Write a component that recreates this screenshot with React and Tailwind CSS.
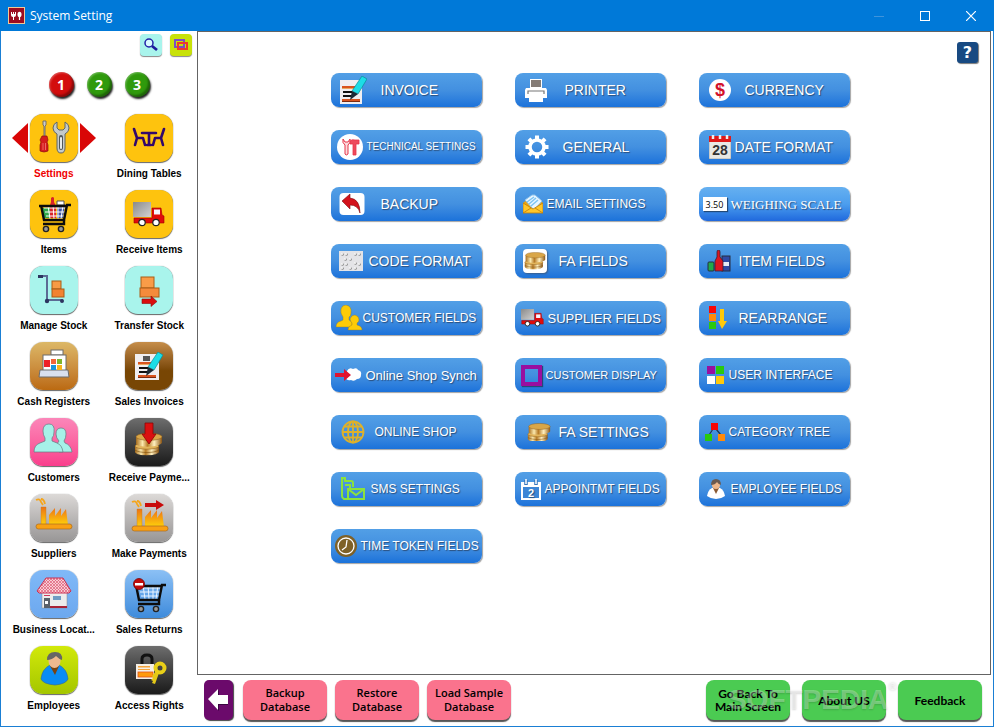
import React, { useState } from "react";

/* ---------- shared drawings ---------- */

function InvoiceIcon({ className, stamp }) {
  return (
    <svg viewBox="0 0 28 28" className={className}>
      {stamp ? <rect x="0" y="2" width="24" height="26" fill="#f0eef0" /> : <rect x="1" y="4" width="22" height="24" fill="#f0eef0" />}
      {stamp && <rect x="8" y="4" width="7" height="5" fill="#555" />}
      <rect x="3" y="10" width="18" height="2" fill="#d9541e" />
      <rect x="3" y="12" width="18" height="1" fill="#e8a860" />
      <rect x="4" y="15" width="9" height="2" fill="#111" />
      <rect x="4" y="19" width="9" height="2" fill="#111" />
      <rect x="3" y="23" width="18" height="2" fill="#d9541e" />
      <rect x="3" y="25" width="18" height="1" fill="#7b2a10" />
      <path d="M23 0 28 3 19 18 13 15z" fill="#1cdde6" stroke="#0a8d98" strokeWidth=".7" />
      <path d="M13 15 19 18 11 24z" fill="#1b2a35" />
    </svg>
  );
}

function Truck({ className }) {
  return (
    <svg viewBox="0 0 32 25" className={className}>
      <defs>
        <linearGradient id="truckBox" x1="0" y1="0" x2="1" y2="1">
          <stop offset="0" stopColor="#8a8a8a" />
          <stop offset="1" stopColor="#d2d2d2" />
        </linearGradient>
      </defs>
      <rect x="0" y="0" width="18" height="15" fill="url(#truckBox)" />
      <path d="M19 6h9l1 7 2 1v7H1v-5h18z" fill="#e10b0b" stroke="#a30000" strokeWidth=".6" />
      <rect x="21" y="7.5" width="6" height="5" fill="#f4f4ff" />
      <circle cx="9" cy="20.5" r="3.2" fill="#fff" stroke="#222" strokeWidth="1.2" />
      <circle cx="23" cy="20.5" r="3.2" fill="#fff" stroke="#222" strokeWidth="1.2" />
    </svg>
  );
}

function Coins({ className }) {
  return (
    <svg viewBox="0 0 28 22" className={className}>
      <defs>
        <linearGradient id="gold">
          <stop offset="0" stopColor="#a86d1c" />
          <stop offset=".25" stopColor="#fbe9ae" />
          <stop offset=".45" stopColor="#b67a25" />
          <stop offset=".7" stopColor="#fff0c0" />
          <stop offset="1" stopColor="#8e5713" />
        </linearGradient>
      </defs>
      <path d="M1 13v6c2 4 20 4 23 0v-6z" fill="url(#gold)" />
      <ellipse cx="12.5" cy="13" rx="11.5" ry="3" fill="#e2b55c" stroke="#8b5a17" strokeWidth=".5" />
      <path d="M2 4v7c3 4 22 3 25-1V4z" fill="url(#gold)" />
      <ellipse cx="14.5" cy="4" rx="12.5" ry="3.5" fill="#d9a648" stroke="#8b5a17" strokeWidth=".5" />
      <path d="M1 17c5 3 18 3 23 0" stroke="#80500f" strokeWidth=".6" fill="none" />
    </svg>
  );
}

/* ---------- sidebar drawings, all on a 48 grid ---------- */

function Drawing({ children }) {
  return (
    <svg viewBox="0 0 48 48" className="size-12" aria-hidden="true">
      {children}
    </svg>
  );
}

function SettingsArt() {
  return (
    <Drawing>
      <path d="M13 7h3v4l-1 1v11h-1V12l-1-1z" fill="#ccc" stroke="#666" strokeWidth=".9" />
      <path d="M12 22h5l1 4-1 2 1 3v6q-4 2-8 0v-6l1-3-1-2z" fill="#d41c1c" stroke="#8c1010" strokeWidth=".7" />
      <path d="M13 29v7M15.500 29v7" stroke="#f37a7a" strokeWidth=".8" />
      <path
        d="M27 8q-4 2-4 6t4 6v14q0 5 4 5t4-5V20q4-2 4-6t-4-6v6l-2 2h-4l-2-2z"
        fill="#c4caca"
        stroke="#5f6666"
        strokeWidth="1"
      />
      <path d="M31 23v11" stroke="#50585a" strokeWidth="4" strokeLinecap="round" />
      <path d="M31 24v10" stroke="#e6eaea" strokeWidth="2" strokeLinecap="round" />
    </Drawing>
  );
}

function DiningArt() {
  return (
    <Drawing>
      <g fill="none" stroke="#32086b" strokeWidth="2.6" strokeLinecap="round" strokeLinejoin="round">
        <path d="M9 15l3 9h6l2 7M12 24l-2 7M39 15l-3 9h-6l-2 7M36 24l2 7" />
        <path d="M17 19h14M24 19v12M22 31h4" />
      </g>
    </Drawing>
  );
}

function Cart({ grid }) {
  return (
    <g>
      <path d="M14 18h22M15 22h20M16 26h18M18 15l2 14M23 15l1 14M28 15v14M33 15l-2 14" stroke={grid} strokeWidth="1" />
      <path d="M9 16h28M11 15l3 15h20l3-15h4" fill="none" stroke="#0c0c0c" strokeWidth="2.4" />
      <path d="M34 30v4H13" fill="none" stroke="#0c0c0c" strokeWidth="2.4" />
      <circle cx="16" cy="39" r="2.6" fill="#999" stroke="#222" strokeWidth="1.4" />
      <circle cx="31" cy="39" r="2.6" fill="#999" stroke="#222" strokeWidth="1.4" />
    </g>
  );
}

function ItemsArt() {
  return (
    <Drawing>
      <path d="M21 8q2-2 3 0v4l2 4v12h-6V15l1-3z" fill="#d8242a" />
      <path d="M12 18h8v10h-6z" fill="#2fa84a" />
      <path d="M27 14h8l-2 14h-6z" fill="#3d55a5" />
      <path d="M27 11h7v4h-7z" fill="#fff" stroke="#555" strokeWidth="1" />
      <Cart grid="#fff" />
    </Drawing>
  );
}

function ReceiveArt() {
  return (
    <div className="flex size-12 items-center justify-center">
      <Truck className="w-8" />
    </div>
  );
}

function ManageArt() {
  return (
    <Drawing>
      <path d="M13 10h4v24h16" fill="none" stroke="#5b6b94" strokeWidth="2" />
      <rect x="8" y="9" width="5" height="3" fill="#2d3560" />
      <circle cx="17" cy="35" r="2.2" fill="#2d3560" />
      <circle cx="32" cy="35" r="2" fill="#2d3560" />
      <rect x="22" y="15" width="9" height="8" fill="#f89b45" stroke="#a95d16" />
      <rect x="22" y="23" width="12" height="8" fill="#f28332" stroke="#a95d16" />
    </Drawing>
  );
}

function TransferArt() {
  return (
    <Drawing>
      <rect x="16" y="11" width="13" height="11" fill="#f99c48" stroke="#a95d16" />
      <rect x="15" y="22" width="19" height="9" fill="#f58b3c" stroke="#a95d16" />
      <path d="M17 33h9v-3l6 5.500-6 5v-3h-9z" fill="#d90d0d" stroke="#8d0a0a" strokeWidth=".6" />
    </Drawing>
  );
}

function CashArt() {
  return (
    <Drawing>
      <g stroke="#6d6d6d" strokeWidth="1">
        <rect x="21" y="8" width="12" height="5" fill="#fff" />
        <rect x="13" y="13" width="23" height="16" fill="#fff" />
        <path d="M10 28h28l1 7H9z" fill="#d9e0ee" />
      </g>
      <rect x="14" y="18" width="6" height="7" fill="#ee2027" />
      <rect x="21" y="17" width="5" height="5" fill="#f2653a" />
      <rect x="27" y="17" width="5" height="5" fill="#7fb52c" />
      <rect x="21" y="23" width="5" height="5" fill="#1a94dd" />
      <rect x="27" y="23" width="5" height="5" fill="#f8b41b" />
    </Drawing>
  );
}

function SalesInvoiceArt() {
  return (
    <div className="flex size-12 items-center justify-center">
      <InvoiceIcon stamp className="size-7" />
    </div>
  );
}

function CustomersArt() {
  return (
    <Drawing>
      <g fill="#a6f1e8" stroke="#627d83" strokeWidth=".7">
        <path d="M29 34q0-5-2-8l2-3q-3-3-3-7 0-6 5-6t5 6q0 4-2 7l1 2q6 2 7 9z" />
        <path d="M4 34q0-7 6-9l5-2v-3q-2-3-2-7 0-7 6-7t5 8q0 4-2 6v3l5 2q5 2 6 9z" />
      </g>
    </Drawing>
  );
}

function ReceivePayArt() {
  return (
    <Drawing>
      <svg x="9" y="14" width="29" height="24" viewBox="0 0 28 22">
        <Coins />
      </svg>
      <path d="M20 5h8v11h3l-7 10-7-10h3z" fill="#da1010" stroke="#8b0505" strokeWidth=".8" />
    </Drawing>
  );
}

function Factory() {
  return (
    <g>
      <defs>
        <linearGradient id="factory" x1="0" y1="0" x2="0" y2="1">
          <stop offset="0" stopColor="#ec7316" />
          <stop offset="1" stopColor="#ffd20a" />
        </linearGradient>
      </defs>
      <path d="M6 6q4-2 5 2l2 3M11 5q3 0 4 5" stroke="#f5a51b" strokeWidth="1.8" fill="none" />
      <path d="M11 13h5v18h-5z" fill="url(#factory)" stroke="#c87920" strokeWidth=".4" />
      <path d="M19 31V21l6-7v8l6-8v8l5-7 2 16z" fill="url(#factory)" />
      <rect x="6" y="30" width="36" height="5" rx="2.5" fill="#f9a013" stroke="#a96a1f" strokeWidth=".7" />
    </g>
  );
}

function SuppliersArt() {
  return (
    <Drawing>
      <Factory />
    </Drawing>
  );
}

function MakePaymentsArt() {
  return (
    <Drawing>
      <g transform="translate(1 2)">
        <Factory />
      </g>
      <path d="M20 9h11V6l8 5-8 5v-3H20z" fill="#c80a0a" />
    </Drawing>
  );
}

function BusinessArt() {
  return (
    <Drawing>
      <defs>
        <pattern id="tiles" width="3" height="3" patternUnits="userSpaceOnUse">
          <rect width="3" height="3" fill="#f9ccd4" />
          <path d="M0 0l3 3M3 0L0 3" stroke="#dd5b77" strokeWidth=".7" />
        </pattern>
      </defs>
      <rect x="12" y="22" width="25" height="16" fill="#ececec" stroke="#888" strokeWidth=".5" />
      <path d="M16 8h17l8 13-2 2H9l-2-2z" fill="url(#tiles)" stroke="#cc2f52" strokeWidth="1" />
      <rect x="14" y="28" width="6" height="10" fill="#5a6068" />
      <rect x="15" y="31" width="3" height="3" fill="#fff" />
      <rect x="23" y="26" width="8" height="4" fill="#6f9cc4" />
      <rect x="14" y="25" width="6" height="1" fill="#d0355a" />
      <rect x="20" y="36" width="17" height="2" fill="#a82237" />
    </Drawing>
  );
}

function ReturnsArt() {
  return (
    <Drawing>
      <Cart grid="#eaf4ff" />
      <circle cx="14" cy="14" r="5.5" fill="#c00b0b" stroke="#790505" strokeWidth=".8" />
      <rect x="10" y="13" width="8" height="2.5" fill="#fff" />
    </Drawing>
  );
}

function EmployeesArt() {
  return (
    <Drawing>
      <path d="M11 33q1-10 9-14h9q8 4 9 14-2 5-13 6-12-1-14-6z" fill="#0a8cf5" stroke="#2a63a0" strokeWidth=".6" />
      <path d="M20 20l5 9 4-9z" fill="#7a4310" />
      <ellipse cx="24.5" cy="15" rx="6" ry="7" fill="#efb98f" />
      <path d="M17 14q0-8 8-8t7 8q-3-1-6-4-4 4-9 4z" fill="#666" />
    </Drawing>
  );
}

function AccessArt() {
  return (
    <Drawing>
      <path d="M17 19v-6q0-4 5-4t5 4v6" fill="none" stroke="#121212" strokeWidth="3" />
      <rect x="11" y="18" width="18" height="15" fill="#f4efe6" />
      <rect x="13" y="20" width="12" height="1.5" fill="#f4a33a" />
      <rect x="13" y="23" width="12" height="1" fill="#f4a33a" />
      <rect x="13" y="26" width="15" height="5" fill="#ff9a0c" stroke="#e0541a" strokeWidth=".8" />
      <path d="M31 25l3 2-4 11-3-1 1-2-2-1 2-2-1-2z" fill="#e4c818" />
      <circle cx="35" cy="22" r="4.5" fill="none" stroke="#e9cf18" strokeWidth="4" />
      <circle cx="35" cy="22" r="2" fill="#444" />
    </Drawing>
  );
}

/* ---------- icons of the blue buttons ---------- */

function ToolsIcon() {
  return (
    <svg viewBox="0 0 26 26" className="size-[26px] shrink-0">
      <circle cx="13" cy="13" r="13" fill="#fff" />
      <path d="M6 5q-1 4 2 6v9q1 2 3 0v-9q3-2 2-6l-2 3H8z" fill="#fbd9dc" stroke="#e8364a" strokeWidth="1" />
      <path d="M13 7q2-2 5-1h4v4h-3v11h-3V10h-3z" fill="#ed4a5c" stroke="#e8364a" strokeWidth=".8" />
    </svg>
  );
}

function UndoIcon() {
  return (
    <svg viewBox="0 0 26 24" className="h-6 w-[26px] shrink-0">
      <rect x=".5" y="1" width="25" height="22" rx="4" fill="#fff" />
      <path d="M3 9l8-7v4q10 1 10 15-2-8-10-8v4z" fill="#d3121b" stroke="#7d0b10" strokeWidth=".6" />
    </svg>
  );
}

function BrailleIcon() {
  const dots = [[3, 3], [7, 3], [16, 3], [20, 3], [6, 8], [11, 8], [3, 13], [7, 13], [16, 12], [20, 13], [3, 17], [11, 17], [16, 17]];
  return (
    <svg viewBox="0 0 24 20" className="h-5 w-6 shrink-0">
      <rect width="24" height="20" fill="#e4e4e7" />
      {dots.map(([x, y]) => (
        <g key={`${x}-${y}`}>
          <circle cx={x + 0.5} cy={y + 0.5} r="1.3" fill="#888" />
          <circle cx={x} cy={y} r="1" fill="#fff" />
        </g>
      ))}
    </svg>
  );
}

function PeopleIcon() {
  return (
    <svg viewBox="0 0 28 26" className="h-[26px] w-7 shrink-0">
      <g fill="#fdcb07" stroke="#8c7a2c" strokeWidth=".4">
        <path d="M1 22q0-5 5-6l2-1v-3q-3-4-2-8 1-4 5-4 6 1 5 8 0 3-2 4v3l3 2v5z" />
        <path d="M13 25q0-4 4-5v-2q-2-2-2-4 1-4 5-4 4 1 4 5 0 2-2 3v2q5 1 5 5z" />
      </g>
    </svg>
  );
}

function SynchIcon() {
  return (
    <svg viewBox="0 0 27 16" className="h-4 w-[27px] shrink-0">
      <path d="M12 4q2-4 6-2 4-2 5 1 4 1 3 5 0 4-4 4-3 3-6 1-5 1-5-3z" fill="#fff" />
      <path d="M0 6h9V2l7 6-7 6v-4H0z" fill="#e0122e" />
    </svg>
  );
}

function GlobeIcon() {
  return (
    <svg viewBox="0 0 24 24" className="size-6 shrink-0">
      <g fill="none" stroke="#deb12a" strokeWidth="1.8">
        <circle cx="12" cy="12" r="10.5" />
        <ellipse cx="12" cy="12" rx="5" ry="10.5" />
        <path d="M12 1v22M1 12h22M3 6.500h18M3 17.500h18" />
      </g>
    </svg>
  );
}

function SmsIcon() {
  return (
    <svg viewBox="0 0 24 24" className="size-6 shrink-0">
      <g fill="none" stroke="#8be23c" strokeWidth="2">
        <path d="M6 22H3q-2-1-2-3V1h3v3h6q2 0 2 2v4" />
        <path d="M4 8h5v3" />
        <path d="M7 12h16v10H7zM7 12l8 6 8-6" />
      </g>
    </svg>
  );
}

function ClockIcon() {
  return (
    <svg viewBox="0 0 22 22" className="size-[22px] shrink-0">
      <circle cx="11" cy="11" r="11" fill="#7e6128" />
      <circle cx="11" cy="11" r="8" fill="none" stroke="#fff" strokeWidth="1.3" />
      <path d="M12 5l-1 7-4 3" fill="none" stroke="#fff" strokeWidth="1.3" />
    </svg>
  );
}

function PrinterIcon() {
  return (
    <svg viewBox="0 0 22 23" className="h-[23px] w-[22px] shrink-0">
      <rect x="5" y="0" width="12" height="9" fill="#fff" />
      <rect x="6" y="1" width="10" height="7" fill="#857c76" />
      <path d="M1 9h20l1 2v8h-4v4H4v-4H0v-8z" fill="#fff" />
      <path d="M3 15v-3h16v3" fill="none" stroke="#777" strokeWidth="1.2" />
    </svg>
  );
}

function GearIcon() {
  return (
    <svg viewBox="0 0 24 24" className="size-6 shrink-0">
      <circle cx="12" cy="12" r="7" fill="none" stroke="#fff" strokeWidth="3.5" />
      <path
        d="M12 .5v4M12 19.500v4M.5 12h4M19.500 12h4M3.900 3.900l2.800 2.800M17.300 17.300l2.800 2.800M3.900 20.100l2.800-2.800M17.300 6.700l2.800-2.800"
        stroke="#fff"
        strokeWidth="4"
      />
    </svg>
  );
}

function MailIcon() {
  return (
    <svg viewBox="0 0 20 20" className="size-5 shrink-0">
      <path d="M0 9l10-8 10 8v10H0z" fill="#e9a312" />
      <path d="M2 6l7-5h3l7 6-8 9z" fill="#e8f5ff" stroke="#8cc2ea" />
      <path d="M4 8l7-5M6 10l7-6M8 12l7-6" stroke="#7cc4f2" strokeWidth="1.5" />
      <path d="M0 9l10 6 10-6v10H0z" fill="#ffc62a" stroke="#c07d07" strokeWidth=".8" />
      <path d="M0 19l8-5M20 19l-8-5" stroke="#c07d07" strokeWidth=".8" />
    </svg>
  );
}

function CoinsBoxIcon() {
  return (
    <span className="grid size-6 shrink-0 place-items-center rounded bg-white shadow-[1px_1px_2px_#3a5d88]">
      <Coins className="w-[22px]" />
    </span>
  );
}

function CoinsIcon() {
  return <Coins className="w-6 shrink-0" />;
}

function TruckIcon() {
  return <Truck className="w-[23px] shrink-0" />;
}

function FrameIcon() {
  return <span className="size-[21px] shrink-0 border-4 border-[#990f9f] shadow-[1px_1px_1px_#234a78]" />;
}

function AppointIcon() {
  return (
    <svg viewBox="0 0 20 21" className="h-[21px] w-5 shrink-0">
      <path d="M0 3h20v18H0z" fill="#fff" />
      <rect x="2" y="8" width="16" height="11" fill="#3d86d6" />
      <path d="M5 1v5M15 1v5" stroke="#3576bd" strokeWidth="3.5" />
      <path d="M5 0v5M15 0v5" stroke="#fff" strokeWidth="1.5" />
      <text x="10" y="18" textAnchor="middle" fontSize="11" fontWeight="700" fontFamily="Liberation Sans, sans-serif" fill="#fff">
        2
      </text>
    </svg>
  );
}

function DollarIcon() {
  return (
    <svg viewBox="0 0 22 22" className="size-[22px] shrink-0 text-shadow-none">
      <circle cx="11" cy="11" r="11" fill="#fff" />
      <text x="11" y="17" textAnchor="middle" fontSize="18" fontWeight="700" fontFamily="Liberation Sans, sans-serif" fill="#d3122b">
        $
      </text>
    </svg>
  );
}

function DateIcon() {
  return (
    <svg viewBox="0 0 22 24" className="h-6 w-[22px] shrink-0 text-shadow-none">
      <rect x="0" y="2" width="22" height="22" fill="#e9e8e4" stroke="#777" strokeWidth=".5" />
      <rect x="0" y="1" width="22" height="6" fill="#e01919" />
      <path d="M4 0v4M11 0v4M18 0v4" stroke="#eee" strokeWidth="2.5" />
      <text x="11" y="20" textAnchor="middle" fontSize="14" fontWeight="700" fontFamily="Liberation Sans, sans-serif" fill="#333">
        28
      </text>
    </svg>
  );
}

function ScaleIcon() {
  return (
    <span className="flex h-3.5 w-6 shrink-0 items-center justify-center bg-white font-['Open_Sans',sans-serif] text-[9px] leading-none text-black shadow-[1px_1px_1px_#234a78] text-shadow-none">
      3.50
    </span>
  );
}

function BottlesIcon() {
  return (
    <svg viewBox="0 0 24 22" className="h-[22px] w-6 shrink-0">
      <rect x="1" y="12" width="6" height="9" rx="1" fill="#21a94a" stroke="#262d40" />
      <rect x="15" y="6" width="8" height="15" fill="#2f4aa5" stroke="#262d40" />
      <rect x="16" y="12" width="6" height="4" fill="#e6ebf5" />
      <path d="M10 2q0-2 1.500-2T13 2v5l3 4v10H8V11l2-4z" fill="#dd1621" stroke="#3a2030" strokeWidth=".8" />
    </svg>
  );
}

function RearrangeIcon() {
  return (
    <svg viewBox="0 0 18 24" className="h-6 w-[18px] shrink-0">
      <rect x="0" y="0" width="7" height="7" fill="#f80606" />
      <rect x="0" y="8" width="7" height="7" fill="#ff8a0a" />
      <rect x="0" y="16" width="7" height="7" fill="#2ac90d" />
      <path d="M11 3h4v12h3l-5 8-4-8h2z" fill="#ffc90a" />
    </svg>
  );
}

function SquaresIcon() {
  return (
    <svg viewBox="0 0 18 18" className="size-[18px] shrink-0">
      <rect x="0" y="0" width="8" height="8" fill="#990f9f" />
      <rect x="9" y="0" width="8" height="8" fill="#2ac90d" />
      <rect x="0" y="10" width="8" height="8" fill="#fff" />
      <rect x="9" y="10" width="8" height="8" fill="#ffc90a" />
    </svg>
  );
}

function TreeIcon() {
  return (
    <svg viewBox="0 0 20 19" className="h-[19px] w-5 shrink-0">
      <path d="M8 6L4 12M11 6l5 6" stroke="#23344d" strokeWidth="1.2" />
      <rect x="6" y="0" width="7" height="7" fill="#f80606" />
      <rect x="0" y="11" width="7" height="7" fill="#2ac90d" />
      <rect x="13" y="11" width="7" height="7" fill="#ff8a0a" />
    </svg>
  );
}

function EmployeeIcon() {
  return (
    <svg viewBox="0 0 18 20" className="h-5 w-[18px] shrink-0">
      <path d="M0 17q1-6 5-8h8q4 2 5 8-4 3-9 3t-9-3z" fill="#fff" />
      <path d="M6 9l3 6 3-6z" fill="#8a5a33" />
      <circle cx="9" cy="6" r="4" fill="#edb78b" />
      <path d="M4 6q0-6 5-6t5 6q-3-1-4-3-2 3-6 3z" fill="#6a5a50" />
    </svg>
  );
}

function InvoiceButtonIcon() {
  return <InvoiceIcon className="size-7 shrink-0" />;
}

/* ---------- data ---------- */

const modules = [
  { label: "Settings", art: SettingsArt, tile: "bg-[#fec30e]" },
  { label: "Dining Tables", art: DiningArt, tile: "bg-[#fec30e]" },
  { label: "Items", art: ItemsArt, tile: "bg-[#fec30e]" },
  { label: "Receive Items", art: ReceiveArt, tile: "bg-[#fec30e]" },
  { label: "Manage Stock", art: ManageArt, tile: "bg-[#a9f4ec]" },
  { label: "Transfer Stock", art: TransferArt, tile: "bg-[#a9f4ec]" },
  { label: "Cash Registers", art: CashArt, tile: "bg-linear-to-b from-[#dcb867] to-[#bb6a10]" },
  { label: "Sales Invoices", art: SalesInvoiceArt, tile: "bg-linear-to-b from-[#c68e4a] to-[#784604] to-60%" },
  { label: "Customers", art: CustomersArt, tile: "bg-linear-to-b from-[#fb86b9] to-[#f93d8c]" },
  { label: "Receive Payme...", art: ReceivePayArt, tile: "bg-linear-to-b from-[#6e6e6e] to-[#1b1b1b]" },
  { label: "Suppliers", art: SuppliersArt, tile: "bg-linear-to-b from-[#dcd9d7] to-[#989696]" },
  { label: "Make Payments", art: MakePaymentsArt, tile: "bg-linear-to-b from-[#dcd9d7] to-[#989696]" },
  { label: "Business Locat...", art: BusinessArt, tile: "bg-linear-to-b from-[#80b9f7] to-[#6ca8ef]" },
  { label: "Sales Returns", art: ReturnsArt, tile: "bg-linear-to-b from-[#8bc0f5] to-[#3d8bdb]" },
  { label: "Employees", art: EmployeesArt, tile: "bg-linear-to-b from-[#d2e90a] to-[#a4c600]" },
  { label: "Access Rights", art: AccessArt, tile: "bg-linear-to-b from-[#6e6e6e] to-[#1b1b1b]" },
];

const settings = [
  { label: "INVOICE", icon: InvoiceButtonIcon, className: "pl-2 gap-3.5 text-[14px]" },
  { label: "PRINTER", icon: PrinterIcon, className: "pl-2.5 gap-4.5 text-[14px]" },
  { label: "CURRENCY", icon: DollarIcon, className: "pl-2.5 gap-3.5 text-[14px]" },
  { label: "TECHNICAL SETTINGS", icon: ToolsIcon, className: "pl-1.5 gap-1 text-[10px]" },
  { label: "GENERAL", icon: GearIcon, className: "pl-2.5 gap-3.5 text-[14px]" },
  { label: "DATE FORMAT", icon: DateIcon, className: "pl-2.5 gap-1 text-[14px]" },
  { label: "BACKUP", icon: UndoIcon, className: "pl-2 gap-4 text-[14px]" },
  { label: "EMAIL SETTINGS", icon: MailIcon, className: "pl-2 gap-1 text-[12px]" },
  { label: "WEIGHING SCALE", icon: ScaleIcon, className: "pl-1 gap-1 text-[13px]", glossy: true },
  { label: "CODE FORMAT", icon: BrailleIcon, className: "pl-2 gap-1.5 text-[14px]" },
  { label: "FA FIELDS", icon: CoinsBoxIcon, className: "pl-2 gap-3 text-[14px]" },
  { label: "ITEM FIELDS", icon: BottlesIcon, className: "pl-2 gap-2 text-[14px]" },
  { label: "CUSTOMER FIELDS", icon: PeopleIcon, className: "pl-1 gap-0 text-[12px]" },
  { label: "SUPPLIER FIELDS", icon: TruckIcon, className: "pl-1.5 gap-1 text-[13px]" },
  { label: "REARRANGE", icon: RearrangeIcon, className: "pl-2.5 gap-3 text-[14px]" },
  { label: "Online Shop Synch", icon: SynchIcon, className: "pl-1 gap-1 text-[13px]" },
  { label: "CUSTOMER DISPLAY", icon: FrameIcon, className: "pl-1.5 gap-1 text-[11px]" },
  { label: "USER INTERFACE", icon: SquaresIcon, className: "pl-2 gap-1 text-[12px]" },
  { label: "ONLINE SHOP", icon: GlobeIcon, className: "pl-2.5 gap-2.5 text-[12px]" },
  { label: "FA SETTINGS", icon: CoinsIcon, className: "pl-3 gap-2 text-[14px]" },
  { label: "CATEGORY TREE", icon: TreeIcon, className: "pl-1.5 gap-1 text-[12px]" },
  { label: "SMS SETTINGS", icon: SmsIcon, className: "pl-2.5 gap-1.5 text-[12px]" },
  { label: "APPOINTMT FIELDS", icon: AppointIcon, className: "pl-1.5 gap-1 text-[12px]" },
  { label: "EMPLOYEE FIELDS", icon: EmployeeIcon, className: "pl-2 gap-1.5 text-[12px]" },
  { label: "TIME TOKEN FIELDS", icon: ClockIcon, className: "pl-1 gap-1 text-[12px]" },
];

/* ---------- parts ---------- */

function TitleBar() {
  return (
    <header className="flex h-[31px] items-center bg-[#0079d8] pl-2 text-white">
      <svg viewBox="0 0 17 17" className="size-[17px]" aria-hidden="true">
        <rect x=".5" y=".5" width="16" height="16" fill="#9c0c20" stroke="#f0c896" />
        <path d="M3 5h1v2h1V5h1v2h1V5h1v3q0 2-2 2v3H5v-3Q3 10 3 8z" fill="#fff" />
        <ellipse cx="11.5" cy="7.5" rx="2" ry="2.8" fill="#fff" />
        <path d="M11.500 9v4" stroke="#fff" strokeWidth="1.2" />
      </svg>
      <h1 className="ml-[5px] text-[12px] leading-4">System Setting</h1>
      <div className="ml-auto flex h-full">
        <button aria-label="Minimize" className="flex w-[46px] items-center justify-center text-[#3f94dc]">
          <svg viewBox="0 0 10 10" className="size-2.5">
            <path d="M0 5.500h10" stroke="currentColor" />
          </svg>
        </button>
        <button aria-label="Maximize" className="flex w-[46px] items-center justify-center">
          <svg viewBox="0 0 10 10" className="size-2.5">
            <rect x=".5" y=".5" width="9" height="9" fill="none" stroke="currentColor" />
          </svg>
        </button>
        <button aria-label="Close" className="flex w-[46px] items-center justify-center">
          <svg viewBox="0 0 10 10" className="size-2.5">
            <path d="M0 0l10 10M10 0L0 10" stroke="currentColor" strokeWidth="1.2" />
          </svg>
        </button>
      </div>
    </header>
  );
}

function PageDots({ page, onChange }) {
  return (
    <div className="mt-4 flex justify-center gap-[13px]">
      {[1, 2, 3].map((n) => (
        <button
          key={n}
          onClick={() => onChange(n)}
          className={`size-[25px] rounded-full text-[14px] leading-none font-bold text-white shadow-[1px_2px_2px_#222,inset_-2px_-2px_2px_rgba(0,0,0,0.35),inset_1px_1px_2px_rgba(255,255,255,0.3)] ${
            page === n ? "bg-[#d30d0d]" : "bg-[#2f9a0c]"
          }`}
        >
          {n}
        </button>
      ))}
    </div>
  );
}

function Pointer({ flip }) {
  return (
    <svg viewBox="0 0 16 30" className={flip ? "h-[30px] w-4 rotate-180" : "h-[30px] w-4"} aria-hidden="true">
      <path d="M16 0v30L0 15z" fill="#d90606" />
    </svg>
  );
}

function ModuleTile({ item, active, onClick }) {
  const Art = item.art;
  return (
    <button onClick={onClick} className="flex flex-col items-center gap-[5px]">
      <span className="flex items-center gap-0.5">
        {active && <Pointer />}
        <span className={`block size-12 rounded-[13px] shadow-[0_1px_1px_#666,0_0_1px_#888] ${item.tile}`}>
          <Art />
        </span>
        {active && <Pointer flip />}
      </span>
      <span
        className={`font-['Liberation_Sans',Arial,sans-serif] text-[10px] leading-[14px] font-bold whitespace-nowrap ${
          active ? "text-[#f00000]" : "text-black"
        }`}
      >
        {item.label}
      </span>
    </button>
  );
}

function Sidebar() {
  const [page, setPage] = useState(1);
  const [selected, setSelected] = useState("Settings");

  return (
    <aside className="w-[196px] shrink-0">
      <div className="flex justify-end gap-2 pt-[3px] pr-[5px]">
        <button aria-label="Search" className="grid size-[22px] place-items-center rounded bg-[#a9f4ec] shadow-[0_1px_1px_#888]">
          <svg viewBox="0 0 16 16" className="size-4">
            <circle cx="6" cy="6" r="4" fill="#d8fbff" stroke="#2222a8" strokeWidth="1.5" />
            <path d="M9 9l5 4" stroke="#1c1c9c" strokeWidth="2.8" />
          </svg>
        </button>
        <button aria-label="Windows" className="grid size-[22px] place-items-center rounded bg-[#c8e208] shadow-[0_1px_1px_#888]">
          <svg viewBox="0 0 16 14" className="h-3.5 w-4" fill="none" strokeWidth="2">
            <rect x="2" y="2" width="9" height="7" stroke="#7b4fc4" />
            <rect x="5" y="5" width="9" height="6" stroke="#f0392b" />
          </svg>
        </button>
      </div>
      <PageDots page={page} onChange={setPage} />
      <nav className="mt-[17px] grid grid-cols-2 gap-y-[9px] pl-[5px]">
        {modules.map((m) => (
          <ModuleTile key={m.label} item={m} active={m.label === selected} onClick={() => setSelected(m.label)} />
        ))}
      </nav>
    </aside>
  );
}

function SettingButton({ item }) {
  const Icon = item.icon;
  return (
    <button
      className={`flex h-[34px] items-center rounded-lg leading-none whitespace-nowrap text-white shadow-[1px_1px_1px_#a3a3a3] text-shadow-[1px_1px_1px_#2b4d78] ${
        item.glossy
          ? "bg-linear-to-b from-[#66b0f0] from-0% via-[#4c9eee] via-50% to-[#2068dd] font-['Liberation_Serif',serif]"
          : "bg-linear-to-b from-[#529fe6] via-[#4390e0] to-[#1b72da] font-['Liberation_Sans',Arial,sans-serif]"
      } ${item.className}`}
    >
      <Icon />
      <span>{item.label}</span>
    </button>
  );
}

function SettingsPanel() {
  return (
    <main className="flex-1 border border-[#646464]">
      <div className="flex justify-end pt-2.5 pr-3">
        <button
          aria-label="Help"
          className="size-[21px] rounded-[3px] bg-[#184a82] font-['DejaVu_Sans',sans-serif] text-[16px] leading-none font-bold text-white shadow-[1px_1px_1px_#777]"
        >
          ?
        </button>
      </div>
      <div className="grid grid-cols-[repeat(3,151px)] justify-center gap-x-[33px] gap-y-[23px] pt-2.5 pr-2 pb-6">
        {settings.map((s) => (
          <SettingButton key={s.label} item={s} />
        ))}
      </div>
    </main>
  );
}

function FooterButton({ tone, children }) {
  return (
    <button
      className={`h-10 w-[84px] rounded-lg text-black shadow-[0_2px_1px_#555] ${
        tone === "pink"
          ? "bg-[#fa738d] font-['Open_Sans',sans-serif] text-[11px] leading-[14px] font-semibold"
          : "bg-[#4bcb52] font-['Lato',sans-serif] text-[12px] leading-[13px] font-bold"
      }`}
    >
      {children}
    </button>
  );
}

function Footer() {
  return (
    <footer className="relative flex items-center gap-2 pt-[5px] pr-[9px] pb-1.5 pl-[7px]">
      <button
        aria-label="Back"
        className="mr-0.5 grid h-10 w-[29px] place-items-center rounded-[5px] bg-[#6b0a6b] shadow-[1px_1px_1px_#444]"
      >
        <svg viewBox="0 0 22 24" className="h-6 w-[22px]">
          <path d="M11 2v6h9v9h-9v6L1 12z" fill="#3a0640" />
          <path d="M10 1v6h10v9H10v6L0 11z" fill="#fff" />
        </svg>
      </button>
      <FooterButton tone="pink">
        Backup
        <br />
        Database
      </FooterButton>
      <FooterButton tone="pink">
        Restore
        <br />
        Database
      </FooterButton>
      <FooterButton tone="pink">
        Load Sample
        <br />
        Database
      </FooterButton>
      <div className="ml-auto flex gap-3">
        <FooterButton>
          Go Back To
          <br />
          Main Screen
        </FooterButton>
        <FooterButton>About US</FooterButton>
        <FooterButton>Feedback</FooterButton>
      </div>
      {/* watermark over the green buttons */}
      <div className="pointer-events-none absolute right-[94px] bottom-2.5 flex font-['Liberation_Sans',Arial,sans-serif] text-[28px] leading-8 font-bold text-white/30 text-shadow-[0_1px_2px_rgba(0,0,0,0.15)]">
        SOFTPEDIA<sup className="text-[12px] leading-4">®</sup>
      </div>
    </footer>
  );
}

export default function App() {
  return (
    <div className="flex min-h-screen flex-col bg-white font-['Open_Sans','Noto_Sans',sans-serif]">
      <TitleBar />
      <div className="flex flex-1 border-x border-b border-[#1a7fd4]">
        <Sidebar />
        <div className="flex flex-1 flex-col pr-0.5">
          <SettingsPanel />
          <Footer />
        </div>
      </div>
    </div>
  );
}
